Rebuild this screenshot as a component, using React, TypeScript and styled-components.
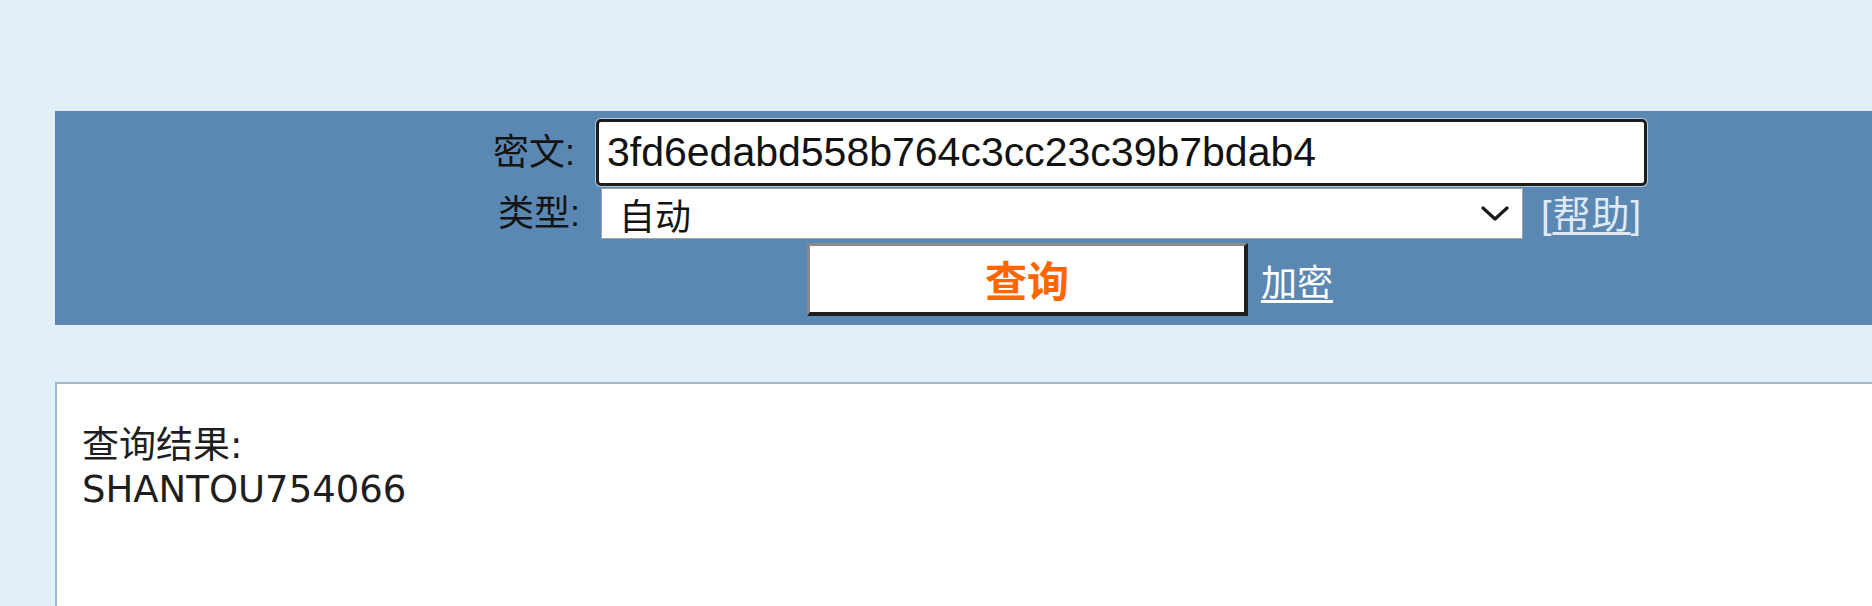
import React from "react";
import styled, { createGlobalStyle } from "styled-components";

const GlobalStyle = createGlobalStyle`
  html, body {
    margin: 0;
    padding: 0;
    background: #e2eff8;
    overflow: hidden;
  }
  body {
    font-family: "Liberation Sans", "Noto Sans CJK SC", sans-serif;
  }
`;

const Page = styled.div`
  padding: 111px 0 0 55px;
  width: 2030px;
  display: flex;
  flex-direction: column;
  gap: 57px;
`;

const SearchPanel = styled.form`
  background: #5b88b3;
  padding: 8px 0 9px;
  display: flex;
  flex-direction: column;
  align-items: center;
`;

const Row = styled.div<{ $top?: number; $gap?: number }>`
  display: flex;
  align-items: center;
  justify-content: center;
  gap: ${(p) => p.$gap ?? 0}px;
  margin-top: ${(p) => p.$top ?? 0}px;
`;

const Label = styled.label`
  width: 103px;
  font-family: "Liberation Sans", "Noto Sans CJK SC", sans-serif;
  font-size: 36px;
  line-height: 1;
  color: #141414;
  white-space: nowrap;
`;

const TextInput = styled.input`
  box-sizing: border-box;
  width: 1051px;
  height: 67px;
  margin: 0;
  padding: 0 8px;
  border: 3px solid #1d1d1d;
  border-radius: 5px;
  background: #fff;
  box-shadow: 0 0 0 1px rgba(255, 255, 255, 0.55);
  font-family: "Liberation Sans", Arial, sans-serif;
  font-size: 41px;
  color: #111;
  outline: none;
`;

const SelectBox = styled.div`
  box-sizing: border-box;
  width: 922px;
  height: 51px;
  display: flex;
  align-items: center;
  justify-content: space-between;
  padding: 0 13px 0 17px;
  background: #fff;
  border: 1px solid #a2a2a2;
  font-family: "Noto Sans CJK SC", sans-serif;
  font-size: 36px;
  line-height: 1;
  color: #141414;
`;

const Chevron = styled.svg`
  width: 28px;
  height: 16px;
  flex: none;
`;

const HelpText = styled.span`
  font-family: "Liberation Sans", "Noto Sans CJK SC", sans-serif;
  font-size: 38px;
  letter-spacing: 1px;
  line-height: 1;
  color: #dfe9f6;
  white-space: nowrap;
`;

const Link = styled.a<{ $color?: string; $size?: number }>`
  color: ${(p) => p.$color ?? "#ffffff"};
  text-decoration: underline;
  text-underline-offset: 4px;
  font-family: "Noto Sans CJK SC", sans-serif;
  font-size: ${(p) => p.$size ?? 36}px;
  line-height: 1;
  cursor: pointer;
`;

const SubmitButton = styled.button`
  box-sizing: border-box;
  width: 441px;
  height: 73px;
  margin: 0;
  padding: 0;
  background: #fff;
  border-style: solid;
  border-width: 3px 4px 4px 3px;
  border-color: #8a8a8a #1e1e1e #1e1e1e #8a8a8a;
  color: #ff6600;
  font-family: "Noto Sans CJK SC", sans-serif;
  font-weight: 700;
  font-size: 42px;
  line-height: 1;
  cursor: pointer;
`;

const ResultBox = styled.div`
  box-sizing: border-box;
  height: 420px;
  padding: 40px 25px;
  background: #fff;
  border: 2px solid #9db9d4;
  font-family: "DejaVu Sans", "Noto Sans CJK SC", sans-serif;
  font-size: 37px;
  line-height: 44px;
  color: #1e1e1e;
`;

const ResultLine = styled.div``;

export default function App() {
  return (
    <>
      <GlobalStyle />
      <Page>
        <SearchPanel onSubmit={(e) => e.preventDefault()}>
          <Row>
            <Label htmlFor="cipher">密文:</Label>
            <TextInput id="cipher" defaultValue="3fd6edabd558b764c3cc23c39b7bdab4" />
          </Row>
          <Row $top={2} $gap={18}>
            <Row>
              <Label>类型:</Label>
              <SelectBox>
                <span>自动</span>
                <Chevron viewBox="0 0 28 16">
                  <path d="M2 2 L14 13 L26 2" fill="none" stroke="#1a1a1a" strokeWidth="3.2" strokeLinecap="round" strokeLinejoin="round" />
                </Chevron>
              </SelectBox>
            </Row>
            <HelpText>
              [<Link $color="#dfe9f6" $size={38}>帮助</Link>]
            </HelpText>
          </Row>
          <Row $top={4} $gap={13}>
            <SubmitButton type="submit">查询</SubmitButton>
            <Link>加密</Link>
          </Row>
        </SearchPanel>
        <ResultBox>
          <ResultLine>查询结果:</ResultLine>
          <ResultLine>SHANTOU754066</ResultLine>
        </ResultBox>
      </Page>
    </>
  );
}
